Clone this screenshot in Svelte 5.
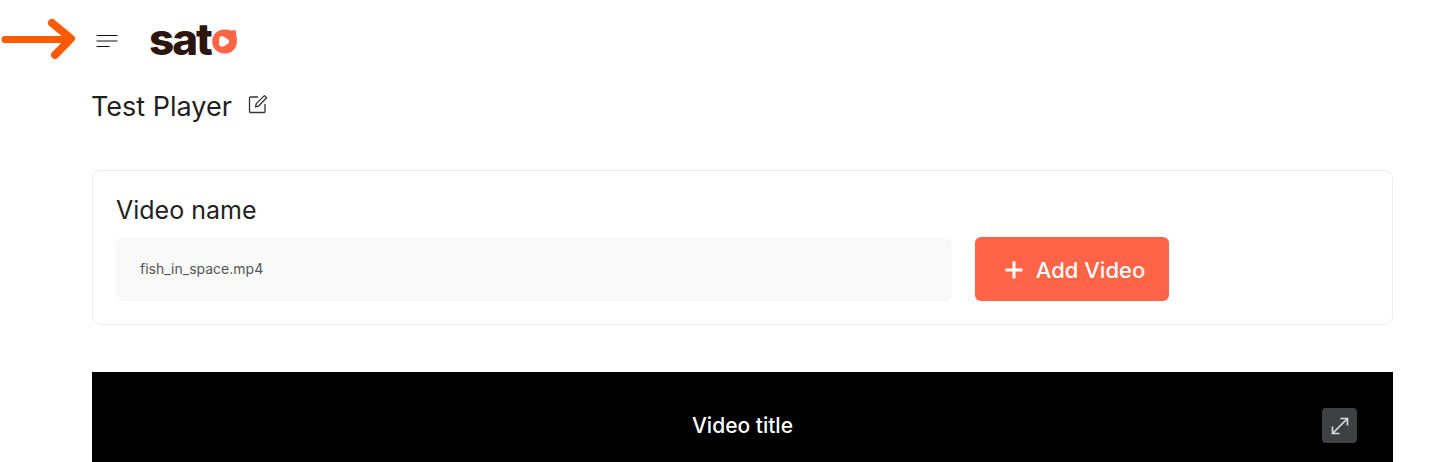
<script>
	let videoName = $state('fish_in_space.mp4');
</script>

<div class="page">
	<svg class="pointer" width="78" height="44" viewBox="0 0 78 44" fill="none" aria-hidden="true">
		<path d="M5 20.5H68" stroke="#ff5a00" stroke-width="7" stroke-linecap="round" />
		<path d="M52 4L71 19.5L55 36" stroke="#ff5a00" stroke-width="8" stroke-linecap="round" stroke-linejoin="round" />
	</svg>

	<header class="topbar">
		<button class="menu" aria-label="Menu">
			<svg width="22" height="16" viewBox="0 0 22 16" fill="none">
				<path d="M0.5 2.5H21.5M0.5 8H21.5M0.5 13.5H13.5" stroke="#111" stroke-width="1.2" />
			</svg>
		</button>
		<div class="logo">
			<span>sat</span>
			<svg width="25" height="25" viewBox="0 0 25 25" fill="none">
				<path fill-rule="evenodd" d="M12.5 0.6C15 0.6 17.4 1 19.6 1.8C21 1.2 22.6 1.2 24 1.8C23.8 3.2 23.8 4.4 24.2 6C24.7 7.6 24.9 9.8 24.9 12.4C24.9 19.4 19.4 24.6 12.4 24.6C5.4 24.6 0.2 19.4 0.2 12.6C0.2 5.8 5.4 0.6 12.5 0.6ZM7.2 10C7.2 7.6 9.4 6.6 11.4 7.6L15.6 10C17.6 11.2 17.6 13.8 15.6 15L11.4 17.4C9.4 18.4 7.2 17.4 7.2 15Z" fill="#ff6446" />
			</svg>
		</div>
	</header>

	<main class="content">
		<div class="title-row">
			<h1>Test Player</h1>
			<svg width="20" height="20" viewBox="0 0 20 20" fill="none">
				<path d="M10 3H2.5A1 1 0 0 0 1.5 4V17.5A1 1 0 0 0 2.5 18.5H16A1 1 0 0 0 17 17.5V10" stroke="#333" stroke-width="1.3" />
				<path d="M7.5 12.8L8.2 9.6L16.4 1.6L18.6 3.7L10.6 12Z" stroke="#333" stroke-width="1.3" stroke-linejoin="round" />
			</svg>
		</div>

		<section class="card">
			<label for="video-name">Video name</label>
			<div class="field-row">
				<input id="video-name" bind:value={videoName} />
				<button class="add">
					<svg width="18" height="18" viewBox="0 0 18 18" fill="none">
						<path d="M9 0.5V17.5M0.5 9H17.5" stroke="#fff" stroke-width="3" />
					</svg>
					Add Video
				</button>
			</div>
		</section>

		<section class="player">
			<div class="player-bar">
				<span class="video-title">Video title</span>
				<button class="expand" aria-label="Expand">
					<svg width="18" height="18" viewBox="0 0 18 18" fill="none">
						<path d="M1.5 16.5L16.5 1.5M9.5 1.5H16.5V8.5M1.5 9.5V16.5H8.5" stroke="#ddd" stroke-width="1.6" />
					</svg>
				</button>
			</div>
		</section>
	</main>
</div>

<style>
	:global(body) {
		background: #fff;
		font-family: Inter, 'Liberation Sans', sans-serif;
		overflow: hidden;
	}

	.page {
		height: 462px;
		overflow: hidden;
		position: relative;
	}

	.pointer {
		left: 0;
		position: absolute;
		top: 19px;
	}

	.topbar {
		align-items: center;
		display: flex;
		gap: 32px;
		height: 80px;
		padding-left: 96px;
	}

	.menu {
		background: none;
		border: 0;
		display: flex;
		margin-top: 2px;
		padding: 0;
	}

	.logo {
		align-items: center;
		color: #2d1510;
		display: flex;
		font-size: 44px;
		font-weight: 800;
		letter-spacing: -2px;
		line-height: 1;
		margin-left: -1px;
		margin-top: -3px;
	}

	.logo svg {
		margin-left: 1px;
		margin-top: 5px;
	}

	.content {
		padding: 0 36px 0 92px;
	}

	.title-row {
		align-items: center;
		display: flex;
		gap: 16px;
		height: 52px;
	}

	h1 {
		color: #1f1f1f;
		font-size: 27px;
		font-weight: 400;
		margin: 0 0 0 -1px;
	}

	.title-row svg {
		margin-top: -4px;
	}

	.card {
		background: #fff;
		border: 1px solid #eeeeee;
		border-radius: 8px;
		box-sizing: border-box;
		display: flex;
		flex-direction: column;
		gap: 10px;
		height: 155px;
		margin-top: 38px;
		padding: 23px;
	}

	label {
		color: #1f1f1f;
		font-size: 25px;
		line-height: 33px;
	}

	.field-row {
		display: flex;
		gap: 23px;
	}

	input {
		background: #f9f9f9;
		border: 0;
		border-radius: 8px;
		box-sizing: border-box;
		color: #555;
		font-family: inherit;
		font-size: 14px;
		height: 64px;
		padding: 0 24px 2px;
		width: 836px;
	}

	.add {
		align-items: center;
		background: #ff6446;
		border: 0;
		border-radius: 6px;
		color: #fff;
		display: flex;
		font-family: inherit;
		font-size: 22px;
		font-weight: 500;
		gap: 13px;
		height: 64px;
		justify-content: center;
		padding: 1px 0 0 6px;
		width: 194px;
	}

	.player {
		background: #000;
		height: 200px;
		margin-top: 47px;
	}

	.player-bar {
		align-items: center;
		display: flex;
		height: 106px;
		justify-content: center;
		position: relative;
	}

	.video-title {
		color: #fff;
		font-size: 21px;
		font-weight: 500;
	}

	.expand {
		align-items: center;
		background: #3f4044;
		border: 0;
		border-radius: 4px;
		display: flex;
		height: 35px;
		justify-content: center;
		padding: 0;
		position: absolute;
		right: 36px;
		top: 36px;
		width: 35px;
	}
</style>
